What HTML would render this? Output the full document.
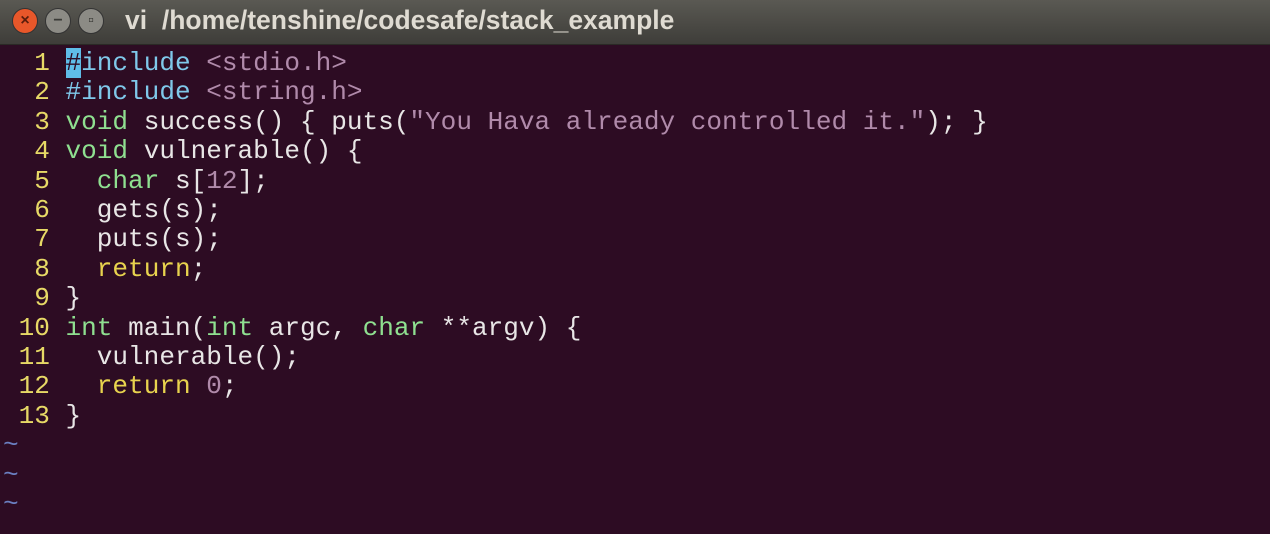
<!DOCTYPE html><html><head><style>
body{margin:0;width:1270px;height:534px;overflow:hidden;background:#2d0c23;}
.tb{position:absolute;left:0;top:0;width:1270px;height:44px;background:linear-gradient(#5a5953,#3e3d39);border-bottom:1px solid #2a2925;}
.t{position:absolute;left:125px;top:5px;font:bold 26.5px "Liberation Sans",sans-serif;color:#dfdbd2;}
.b{position:absolute;top:8px;width:26px;height:26px;border-radius:50%;box-sizing:border-box;border:1px solid #333;text-align:center;font:bold 16px/24px "Liberation Sans",sans-serif;}
pre{position:absolute;left:3px;top:49px;margin:0;font:26.05px/29.4px "Liberation Mono",monospace;color:#e8e6e6;}
.n{color:#e7d966}.p{color:#7fc8ea}.s{color:#b08aaa}.ty{color:#8fe090}.k{color:#e8d34e}.c{background:#5fbde8;color:#2d0c23}.tl{color:#6a7fc0}
</style></head><body>
<div class="tb"><div class="b" style="left:12px;background:#e8572a;color:#5a1d0c">×</div><div class="b" style="left:45px;background:#8c8b85;color:#3a3a36">−</div><div class="b" style="left:78px;background:#8c8b85;color:#3a3a36">▫</div><div class="t">vi&nbsp; /home/tenshine/codesafe/stack_example</div></div>
<pre><span class="n">  1 </span><span class="p"><span class="c">#</span>include</span> <span class="s">&lt;stdio.h&gt;</span>
<span class="n">  2 </span><span class="p">#include</span> <span class="s">&lt;string.h&gt;</span>
<span class="n">  3 </span><span class="ty">void</span> success() { puts(<span class="s">"You Hava already controlled it."</span>); }
<span class="n">  4 </span><span class="ty">void</span> vulnerable() {
<span class="n">  5 </span>  <span class="ty">char</span> s[<span class="s">12</span>];
<span class="n">  6 </span>  gets(s);
<span class="n">  7 </span>  puts(s);
<span class="n">  8 </span>  <span class="k">return</span>;
<span class="n">  9 </span>}
<span class="n"> 10 </span><span class="ty">int</span> main(<span class="ty">int</span> argc, <span class="ty">char</span> **argv) {
<span class="n"> 11 </span>  vulnerable();
<span class="n"> 12 </span>  <span class="k">return</span> <span class="s">0</span>;
<span class="n"> 13 </span>}
<span class="tl">~</span>
<span class="tl">~</span>
<span class="tl">~</span></pre>
</body></html>
